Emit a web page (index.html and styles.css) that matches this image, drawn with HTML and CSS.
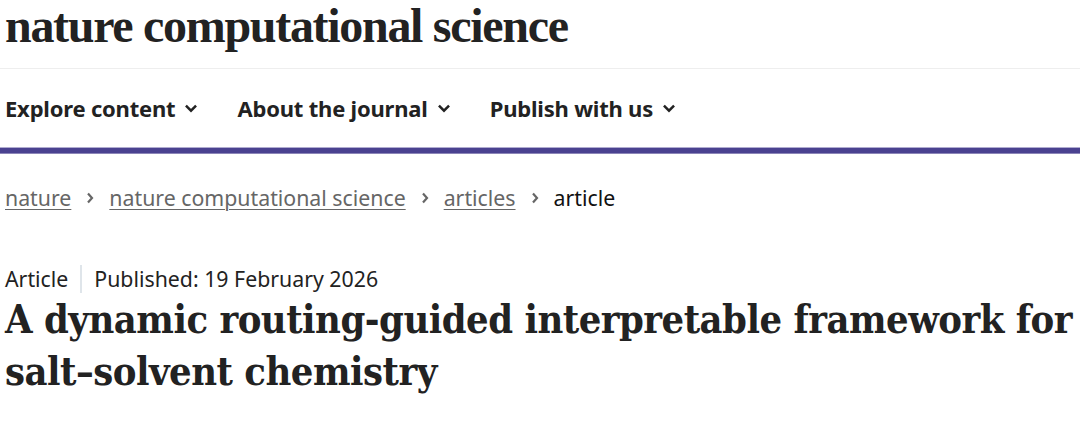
FILE: index.html
```html
<!DOCTYPE html>
<html lang="en">
<head>
<meta charset="utf-8">
<title>A dynamic routing-guided interpretable framework for salt–solvent chemistry</title>
<link rel="stylesheet" href="styles.css">
</head>
<body>
<header class="masthead">
  <div class="logo">nature computational science</div>
</header>
<nav class="mainnav">
  <a class="navitem" href="#">Explore content
    <svg class="chev" viewBox="0 0 12 8" width="14" height="9"><path d="M1.5 1.5 L6 6 L10.5 1.5" fill="none" stroke="#222" stroke-width="2.2"/></svg>
  </a>
  <a class="navitem" href="#">About the journal
    <svg class="chev" viewBox="0 0 12 8" width="14" height="9"><path d="M1.5 1.5 L6 6 L10.5 1.5" fill="none" stroke="#222" stroke-width="2.2"/></svg>
  </a>
  <a class="navitem" href="#">Publish with us
    <svg class="chev" viewBox="0 0 12 8" width="14" height="9"><path d="M1.5 1.5 L6 6 L10.5 1.5" fill="none" stroke="#222" stroke-width="2.2"/></svg>
  </a>
</nav>
<div class="accent"></div>
<ol class="crumbs">
  <li><a href="#">nature</a></li>
  <li class="sep"><svg viewBox="0 0 8 12" width="8" height="12"><path d="M2 1.5 L6 6 L2 10.5" fill="none" stroke="#666" stroke-width="2.2"/></svg></li>
  <li><a href="#">nature computational science</a></li>
  <li class="sep"><svg viewBox="0 0 8 12" width="8" height="12"><path d="M2 1.5 L6 6 L2 10.5" fill="none" stroke="#666" stroke-width="2.2"/></svg></li>
  <li><a href="#">articles</a></li>
  <li class="sep"><svg viewBox="0 0 8 12" width="8" height="12"><path d="M2 1.5 L6 6 L2 10.5" fill="none" stroke="#666" stroke-width="2.2"/></svg></li>
  <li class="current">article</li>
</ol>
<article class="article">
  <ul class="meta">
    <li class="type">Article</li>
    <li class="date">Published: 19 February 2026</li>
  </ul>
  <h1 class="title">A dynamic routing-guided interpretable framework for salt–solvent chemistry</h1>
</article>
</body>
</html>
```

FILE: styles.css
```css
html, body {
  margin: 0;
  padding: 0;
  background: #fff;
}
body {
  font-family: "Noto Sans", "Open Sans", sans-serif;
  color: #222;
  width: 1080px;
  overflow: hidden;
}
.masthead {
  height: 68px;
  border-bottom: 1px solid #eeeeee;
  display: flex;
  align-items: flex-start;
  padding-left: 5px;
}
.logo {
  font-family: "Liberation Serif", "Times New Roman", serif;
  font-weight: bold;
  font-size: 48px;
  letter-spacing: -1.3px;
  line-height: 1;
  color: #222;
  margin-top: 2px;
}
.mainnav {
  height: 78px;
  display: flex;
  align-items: center;
  gap: 39px;
  padding-left: 5px;
}
.navitem {
  font-weight: bold;
  font-size: 22px;
  color: #222;
  text-decoration: none;
  display: flex;
  align-items: center;
  gap: 9px;
  letter-spacing: -0.2px;
}
.chev { display: block; }
.accent {
  height: 7px;
  background: #4a4290;
  border-top: 1px solid #b0acd0;
  border-bottom: 1px solid #8c86b8;
  box-sizing: border-box;
}
.crumbs {
  list-style: none;
  margin: 0;
  padding: 30px 0 0 5px;
  display: flex;
  align-items: center;
  gap: 15px;
  font-size: 21.3px;
  line-height: 28px;
}
.crumbs a {
  color: #666;
  text-decoration: underline;
  text-underline-offset: 3px;
  text-decoration-thickness: 1px;
}
.crumbs .sep svg { display: block; }
.crumbs .current { color: #111; }
.article {
  padding: 53px 0 0 5px;
}
.meta {
  list-style: none;
  margin: 0;
  padding: 0;
  display: flex;
  align-items: center;
  font-size: 21.3px;
  line-height: 28px;
  color: #222;
}
.meta .type {
  padding-right: 12px;
  border-right: 2px solid #dfe5ea;
  margin-right: 12px;
}
.title {
  margin: 0;
  font-family: "DejaVu Serif", "Liberation Serif", serif;
  font-stretch: condensed;
  font-weight: bold;
  font-size: 39.5px;
  line-height: 52px;
  color: #222;
  letter-spacing: -0.5px;
}
```
